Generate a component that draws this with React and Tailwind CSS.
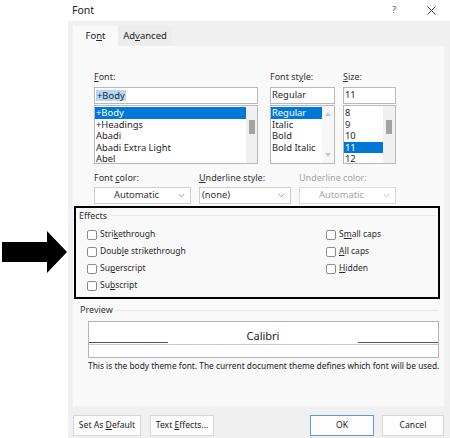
import React from "react";

const U = ({ children }) => <span className="underline underline-offset-[1px] decoration-[0.5px]">{children}</span>;

function Chevron({ color = "#8a8a8a" }) {
  return (
    <svg width="7" height="5" viewBox="0 0 7 5" className="shrink-0">
      <path d="M0.8 1 L3.5 3.8 L6.2 1" fill="none" stroke={color} strokeWidth="0.8" />
    </svg>
  );
}

function Checkbox({ children }) {
  return (
    <div className="flex items-center h-[17px]">
      <div className="w-[10px] h-[10px] border border-[#8c8c8c] rounded-[2px] bg-white shrink-0" />
      <span className="ml-[3px] text-[8.5px] text-[#2a2a2a]">{children}</span>
    </div>
  );
}

function Row({ children, selected }) {
  return (
    <div
      className={
        "h-[11.6px] leading-[11.6px] pl-[1px] text-[9.4px] " +
        (selected ? "bg-[#0078d7] text-white" : "text-[#1f1f1f]")
      }
    >
      {children}
    </div>
  );
}

export default function App() {
  return (
    <div className="w-[450px] h-[438px] bg-white flex overflow-hidden font-['Noto_Sans',sans-serif] text-[#1f1f1f]">
      {/* left annotation arrow */}
      <div className="w-[68px] shrink-0 pt-[231px]">
        <svg width="68" height="42" viewBox="0 0 68 42">
          <polygon points="2,11 47,11 47,0 67,21 47,42 47,31 2,31" fill="#000" />
        </svg>
      </div>

      {/* dialog */}
      <div className="flex-1 flex flex-col">
        <div className="h-[21px] shrink-0 flex items-center pl-[4px] pr-[14px]">
          <span className="text-[10.5px] text-[#222]">Font</span>
          <span className="ml-auto text-[9.5px] text-[#555]">?</span>
          <svg width="9" height="9" viewBox="0 0 9 9" className="ml-[31px]">
            <path d="M0.5 0.5 L8.5 8.5 M8.5 0.5 L0.5 8.5" stroke="#333" strokeWidth="0.9" />
          </svg>
        </div>

        <div className="flex-1 bg-[#f0f0f0] pl-[5px] pr-[6px] pt-[5px] flex flex-col">
          {/* tabs */}
          <div className="flex h-[20px] shrink-0">
            <div className="w-[45px] bg-[#f9f9f9] flex items-center justify-center text-[9.5px] text-[#222]">
              <span>Fo<U>n</U>t</span>
            </div>
            <div className="w-[54px] bg-[#ececec] flex items-center justify-center text-[9.5px] text-[#222]">
              <span>Ad<U>v</U>anced</span>
            </div>
          </div>

          {/* panel */}
          <div className="h-[360px] shrink-0 bg-[#f9f9f9] flex flex-col">
            {/* lists row */}
            <div className="flex ml-[21px] mt-[25px]">
              {/* Font */}
              <div className="w-[164px] flex flex-col">
                <div className="h-[12px] leading-[12px] text-[9px] text-[#333] mb-[4px]">
                  <U>F</U>ont:
                </div>
                <div className="h-[17px] bg-white border border-[#b9b9b9] flex items-center pl-[1px]">
                  <span className="bg-[#b5d7f5] text-[9.4px] leading-[11px] px-[1px]">+Body</span>
                </div>
                <div className="h-[59px] mt-[1px] bg-white border border-[#b9b9b9] flex">
                  <div className="flex-1 flex flex-col pt-[1px]">
                    <Row selected>+Body</Row>
                    <Row>+Headings</Row>
                    <Row>Abadi</Row>
                    <Row>Abadi Extra Light</Row>
                    <Row>Abel</Row>
                  </div>
                  <div className="w-[11px] bg-[#f0f0f0] flex justify-center pt-[14px]">
                    <div className="w-[6px] h-[14px] bg-[#a3a3a3]" />
                  </div>
                </div>
              </div>

              {/* Font style */}
              <div className="w-[65px] ml-[12px] flex flex-col">
                <div className="h-[12px] leading-[12px] text-[9px] text-[#333] mb-[4px]">
                  Font st<U>y</U>le:
                </div>
                <div className="h-[17px] bg-white border border-[#b9b9b9] flex items-center pl-[1px] text-[9.4px]">
                  Regular
                </div>
                <div className="h-[59px] mt-[1px] bg-white border border-[#b9b9b9] flex">
                  <div className="flex-1 flex flex-col pt-[1px]">
                    <Row selected>Regular</Row>
                    <Row>Italic</Row>
                    <Row>Bold</Row>
                    <Row>Bold Italic</Row>
                  </div>
                  <div className="w-[12px] bg-[#f7f7f7] flex flex-col items-center justify-between py-[6px]">
                    <svg width="6" height="4" viewBox="0 0 6 4">
                      <polygon points="0,4 3,0 6,4" fill="#c8c8c8" />
                    </svg>
                    <svg width="6" height="4" viewBox="0 0 6 4">
                      <polygon points="0,0 6,0 3,4" fill="#c8c8c8" />
                    </svg>
                  </div>
                </div>
              </div>

              {/* Size */}
              <div className="w-[53px] ml-[8px] flex flex-col">
                <div className="h-[12px] leading-[12px] text-[9px] text-[#333] mb-[4px]">
                  <U>S</U>ize:
                </div>
                <div className="h-[17px] bg-white border border-[#b9b9b9] flex items-center pl-[1px] text-[9.4px]">
                  11
                </div>
                <div className="h-[59px] mt-[1px] bg-white border border-[#b9b9b9] flex">
                  <div className="flex-1 flex flex-col pt-[1px]">
                    <Row>8</Row>
                    <Row>9</Row>
                    <Row>10</Row>
                    <Row selected>11</Row>
                    <Row>12</Row>
                  </div>
                  <div className="w-[12px] bg-[#f0f0f0] flex justify-center pt-[14px]">
                    <div className="w-[6px] h-[14px] bg-[#a3a3a3]" />
                  </div>
                </div>
              </div>
            </div>

            {/* dropdown row */}
            <div className="flex ml-[21px] mt-[8px]">
              <div className="w-[97px] flex flex-col">
                <div className="h-[12px] leading-[12px] text-[9px] text-[#333] mb-[3px]">
                  Font <U>c</U>olor:
                </div>
                <div className="h-[17px] bg-white border border-[#d0d0d0] flex items-center pr-[5px]">
                  <span className="flex-1 text-center text-[9.4px] text-[#333]">Automatic</span>
                  <Chevron />
                </div>
              </div>
              <div className="w-[92px] ml-[8px] flex flex-col">
                <div className="h-[12px] leading-[12px] text-[9px] text-[#333] mb-[3px]">
                  <U>U</U>nderline style:
                </div>
                <div className="h-[17px] bg-white border border-[#d0d0d0] flex items-center pl-[2px] pr-[5px]">
                  <span className="flex-1 text-[9.4px] text-[#333]">(none)</span>
                  <Chevron />
                </div>
              </div>
              <div className="w-[97px] ml-[8px] flex flex-col">
                <div className="h-[12px] leading-[12px] text-[9px] text-[#a6a6a6] mb-[3px]">
                  Underline color:
                </div>
                <div className="h-[17px] bg-white border border-[#dcdcdc] flex items-center pr-[5px]">
                  <span className="flex-1 text-center text-[9.4px] text-[#a6a6a6]">Automatic</span>
                  <Chevron color="#b0b0b0" />
                </div>
              </div>
            </div>

            {/* Effects (annotated box) */}
            <div className="ml-[1px] mt-[2px] w-[366px] h-[93px] border-2 border-black flex flex-col">
              <div className="flex items-center mt-[2px] pl-[3px] pr-[2px]">
                <span className="text-[9px] text-[#333] leading-[12px]">Effects</span>
                <div className="flex-1 h-px bg-[#e6e6e6] ml-[4px] -mt-[2px]" />
              </div>
              <div className="flex pl-[11px] mt-[4px]">
                <div className="flex flex-col w-[239px]">
                  <Checkbox>Stri<U>k</U>ethrough</Checkbox>
                  <Checkbox>Doub<U>l</U>e strikethrough</Checkbox>
                  <Checkbox>Su<U>p</U>erscript</Checkbox>
                  <Checkbox>Su<U>b</U>script</Checkbox>
                </div>
                <div className="flex flex-col">
                  <Checkbox>S<U>m</U>all caps</Checkbox>
                  <Checkbox><U>A</U>ll caps</Checkbox>
                  <Checkbox><U>H</U>idden</Checkbox>
                </div>
              </div>
            </div>

            {/* Preview */}
            <div className="flex items-center ml-[7px] mr-[6px] mt-[5px]">
              <span className="text-[9px] text-[#333] leading-[12px]">Preview</span>
              <div className="flex-1 h-px bg-[#e6e6e6] ml-[4px]" />
            </div>
            <div className="ml-[15px] mt-[5px] w-[351px] h-[37px] bg-white border border-[#b4b4b4] flex flex-col">
              <div className="h-[22px] flex items-end">
                <div className="w-[79px] h-px bg-[#555] mb-[1px]" />
                <span className="flex-1 text-center text-[11px] leading-[14px] text-[#222] pb-[1px]">Calibri</span>
                <div className="w-[80px] h-px bg-[#555] mb-[1px]" />
              </div>
              <div className="h-px bg-[#c8c8c8]" />
            </div>
            <div className="ml-[15px] mt-[2px] text-[8.35px] leading-[12px] text-[#222] whitespace-nowrap">
              This is the body theme font. The current document theme defines which font will be used.
            </div>
          </div>

          {/* buttons */}
          <div className="flex mt-[9px] h-[21px]">
            <div className="w-[68px] bg-[#fdfdfd] border border-[#d6d6d6] flex items-center justify-center text-[8.6px] text-[#222]">
              <span>Set As <U>D</U>efault</span>
            </div>
            <div className="w-[64px] ml-[9px] bg-[#fdfdfd] border border-[#d6d6d6] flex items-center justify-center text-[8.6px] text-[#222]">
              <span>Text <U>E</U>ffects...</span>
            </div>
            <div className="w-[64px] ml-auto bg-[#fdfdfd] border border-[#5c9ad6] flex items-center justify-center text-[8.6px] text-[#222]">
              OK
            </div>
            <div className="w-[62px] ml-[8px] bg-[#fdfdfd] border border-[#d6d6d6] flex items-center justify-center text-[8.6px] text-[#222]">
              Cancel
            </div>
          </div>
        </div>
      </div>
    </div>
  );
}
